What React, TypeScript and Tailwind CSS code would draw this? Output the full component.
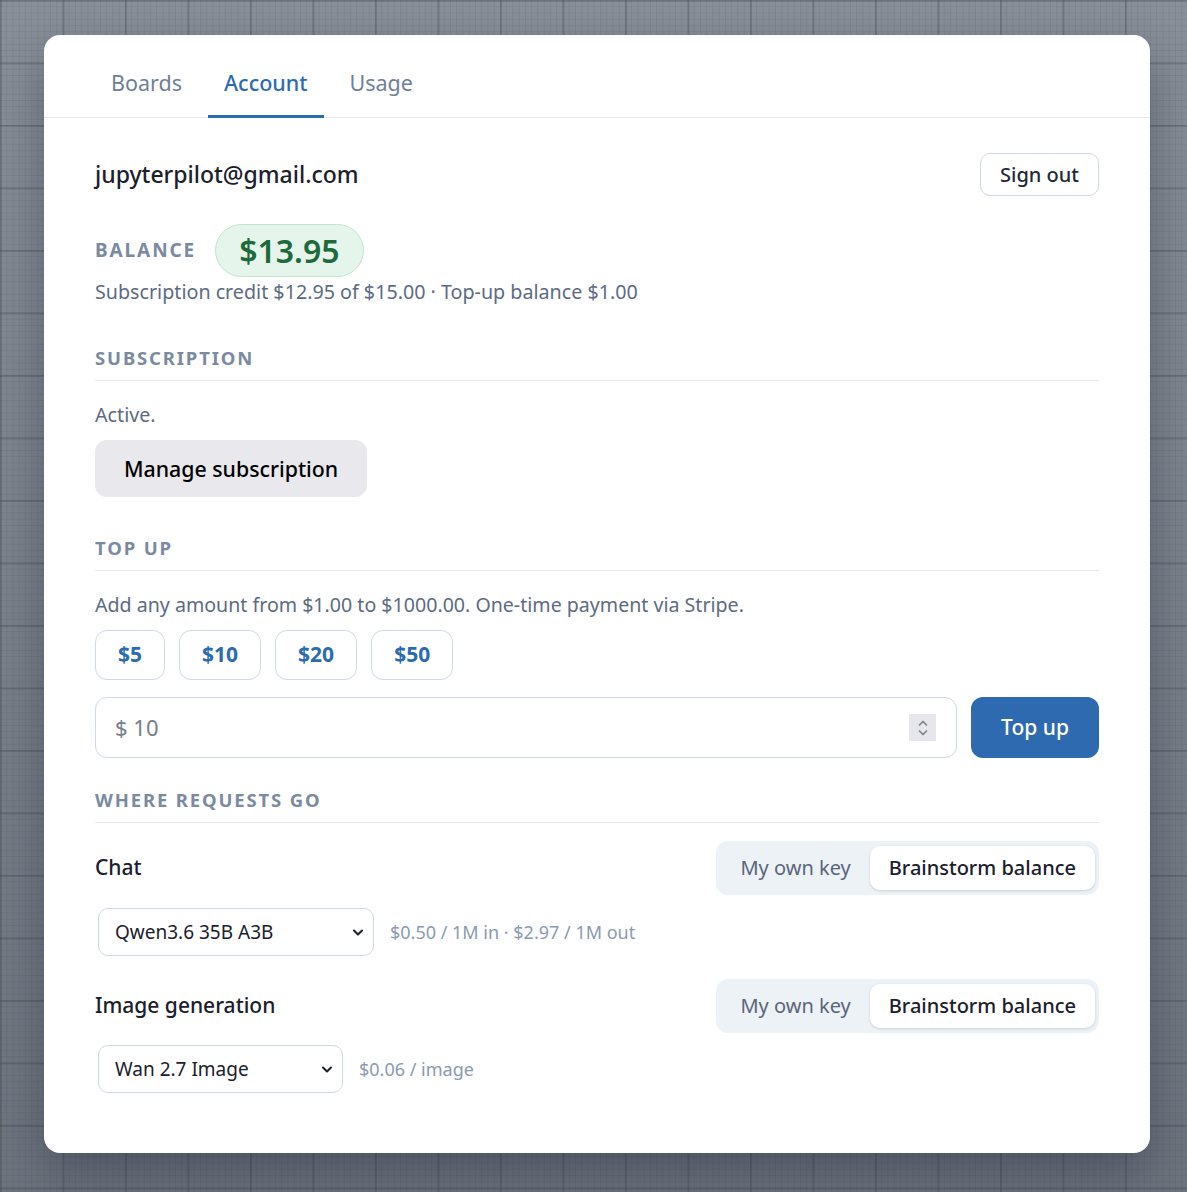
import type { ReactNode } from "react";

type Tab = "boards" | "account" | "usage";

const tabs: Array<{ id: Tab; label: string }> = [
  { id: "boards", label: "Boards" },
  { id: "account", label: "Account" },
  { id: "usage", label: "Usage" }
];

const presets = ["$5", "$10", "$20", "$50"];

function SectionHeading({ children }: { children: ReactNode }) {
  return (
    <h2 className="border-b border-[#e2e8f0] pb-[10px] text-[18.5px] leading-[24px] font-bold tracking-[0.1em] text-[#7b8aa1] uppercase">
      {children}
    </h2>
  );
}

function Chevron() {
  return (
    <svg width="12" height="12" viewBox="0 0 12 12" fill="none" className="text-[#1a202c]">
      <path d="M2 4.5L6 8.5l4-4" stroke="currentColor" strokeWidth="2" strokeLinecap="round" strokeLinejoin="round" />
    </svg>
  );
}

function RouteToggle() {
  return (
    <div className="flex rounded-[12px] bg-[#edf2f7] py-[5px] pr-[4px] pl-[5px]">
      <button type="button" className="h-[44px] px-[19px] text-[20px] text-[#5b6579]">
        My own key
      </button>
      <button
        type="button"
        className="h-[44px] rounded-[10px] bg-white px-[19px] text-[20px] font-medium text-[#1a202c] shadow-[0_1px_3px_rgba(15,23,42,0.15)]"
      >
        Brainstorm balance
      </button>
    </div>
  );
}

function ModelSelect({ value, width }: { value: string; width: string }) {
  return (
    <div
      className={`ml-[3px] flex h-[48px] items-center justify-between rounded-[10px] border border-[#cfd9e6] bg-white pr-[9px] pl-[16px] text-[19px] text-[#1a202c] ${width}`}
    >
      <span>{value}</span>
      <Chevron />
    </div>
  );
}

export default function App() {
  const activeTab: Tab = "account";

  return (
    <div className="min-h-screen bg-[#7c828c] bg-[linear-gradient(to_right,rgba(60,66,78,0.28)_2px,transparent_2px),linear-gradient(to_bottom,rgba(60,66,78,0.28)_2px,transparent_2px),linear-gradient(to_right,rgba(60,66,78,0.12)_1px,transparent_1px),linear-gradient(to_bottom,rgba(60,66,78,0.12)_1px,transparent_1px),linear-gradient(to_bottom,#8a9099,#6e747e)] bg-[size:62.5px_62.5px,62.5px_62.5px,6.25px_6.25px,6.25px_6.25px,100%_100%] pt-[35px] pb-[38px] pl-[44px] font-['Noto_Sans',sans-serif]">
      <div className="w-[1106px] rounded-[16px] bg-white shadow-[0_20px_50px_rgba(15,23,42,0.35)]">
        <nav className="flex gap-[10px] border-b border-[#e2e8f0] px-[51px] pt-[24px]">
          {tabs.map((tab) => {
            const isActive = tab.id === activeTab;
            return (
              <button
                key={tab.id}
                type="button"
                className={`-mb-px border-b-[3px] px-4 pt-[9px] pb-[17px] text-[21.5px] leading-[30px] ${
                  isActive
                    ? "border-[#2b6cb0] font-medium text-[#2b6cb0]"
                    : "border-transparent text-[#6f7f98]"
                }`}
              >
                {tab.label}
              </button>
            );
          })}
        </nav>

        <div className="px-[51px] pt-[35px] pb-[60px]">
          <div className="flex items-center justify-between">
            <p className="text-[23px] font-medium text-[#1a202c]">jupyterpilot@gmail.com</p>
            <button
              type="button"
              className="h-[43px] rounded-[10px] border border-[#cfd9e6] bg-white px-[19px] text-[20px] font-medium text-[#1f2937]"
            >
              Sign out
            </button>
          </div>

          <div className="mt-[28px] flex items-center gap-[19px]">
            <span className="text-[19px] font-bold tracking-[0.1em] text-[#7b8aa1]">BALANCE</span>
            <span className="flex h-[53px] items-center rounded-full border border-[#bfe5cc] bg-[#e6f5ec] px-[23px] text-[32px] font-semibold text-[#1d6b3b]">
              $13.95
            </span>
          </div>
          <p className="mt-[1px] text-[19.7px] leading-[28px] text-[#5d6b82]">
            Subscription credit $12.95 of $15.00 · Top-up balance $1.00
          </p>

          <div className="mt-[40px]">
            <SectionHeading>Subscription</SectionHeading>
            <p className="mt-[22px] text-[19.7px] leading-[24px] text-[#5d6b82]">Active.</p>
            <button
              type="button"
              className="mt-[13px] h-[57px] rounded-[12px] bg-[#e8e8ed] px-[29px] text-[21.3px] font-medium text-black"
            >
              Manage subscription
            </button>
          </div>

          <div className="mt-[39px]">
            <SectionHeading>Top up</SectionHeading>
            <p className="mt-[20px] text-[19.6px] leading-[28px] text-[#5d6b82]">
              Add any amount from $1.00 to $1000.00. One-time payment via Stripe.
            </p>
            <div className="mt-[11px] flex gap-[14px]">
              {presets.map((preset) => (
                <button
                  key={preset}
                  type="button"
                  className="h-[50px] rounded-[12px] border border-[#cfd9e6] bg-white px-[22px] text-[21px] font-bold text-[#2b6cb0]"
                >
                  {preset}
                </button>
              ))}
            </div>
            <div className="mt-[17px] flex gap-[14px]">
              <div className="flex h-[61px] flex-1 items-center justify-between rounded-[12px] border border-[#cfd9e6] bg-white pr-[20px] pl-[19px] text-[22px] text-[#777d87]">
                <span>$ 10</span>
                <span className="flex h-[27px] w-[27px] flex-col items-center justify-center bg-[#e6e6ec] text-[#7f848d]">
                  <svg width="12" height="20" viewBox="0 0 12 20" fill="none">
                    <path d="M2.5 7L6 3.5 9.5 7M2.5 13L6 16.5 9.5 13" stroke="currentColor" strokeWidth="1.7" strokeLinecap="round" strokeLinejoin="round" />
                  </svg>
                </span>
              </div>
              <button
                type="button"
                className="h-[61px] w-[128px] rounded-[12px] bg-[#2d6ab0] text-[21px] font-medium text-white"
              >
                Top up
              </button>
            </div>
          </div>

          <div className="mt-[30px]">
            <SectionHeading>Where requests go</SectionHeading>

            <div className="mt-[18px] flex items-center justify-between">
              <span className="text-[21px] font-medium text-[#1a202c]">Chat</span>
              <RouteToggle />
            </div>
            <div className="mt-[13px] flex items-center gap-[16px]">
              <ModelSelect value="Qwen3.6 35B A3B" width="w-[276px]" />
              <span className="text-[18px] text-[#8a9ab1]">$0.50 / 1M in · $2.97 / 1M out</span>
            </div>

            <div className="mt-[23px] flex items-center justify-between">
              <span className="text-[21px] font-medium text-[#1a202c]">Image generation</span>
              <RouteToggle />
            </div>
            <div className="mt-[12px] flex items-center gap-[16px]">
              <ModelSelect value="Wan 2.7 Image" width="w-[245px]" />
              <span className="text-[18px] text-[#8a9ab1]">$0.06 / image</span>
            </div>
          </div>
        </div>
      </div>
    </div>
  );
}
